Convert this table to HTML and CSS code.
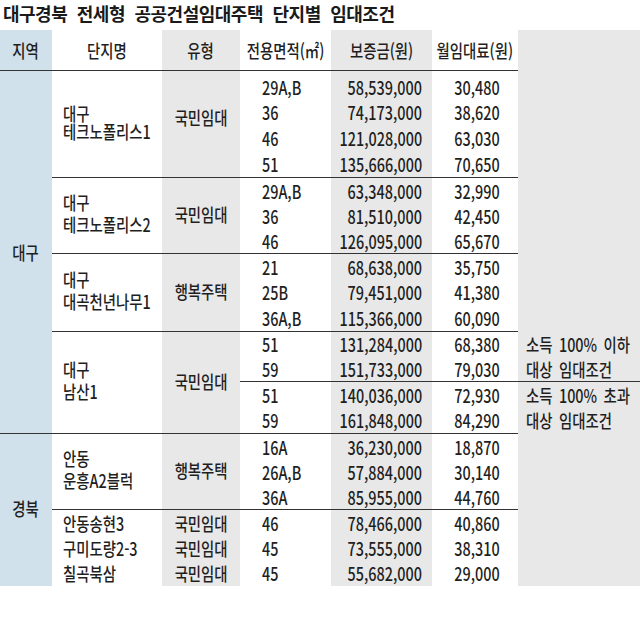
FILE: index.html
```html
<!DOCTYPE html>
<html lang="ko">
<head>
<meta charset="utf-8">
<title>대구경북 전세형 공공건설임대주택 단지별 임대조건</title>
<link rel="stylesheet" href="styles.css">
</head>
<body>
<main class="graphic">
  <h1 class="title">대구경북 전세형 공공건설임대주택 단지별 임대조건</h1>
  <div class="sheet">
    <!-- header -->
    <div class="cell hd rule-b"><span class="t">지역</span></div>
    <div class="cell hd rule-b"><span class="t">단지명</span></div>
    <div class="cell hd rule-b"><span class="t">유형</span></div>
    <div class="cell hd rule-b"><span class="t">전용면적(㎡)</span></div>
    <div class="cell hd rule-b"><span class="t">보증금(원)</span></div>
    <div class="cell hd rule-b"><span class="t">월임대료(원)</span></div>
    <div class="cell hd"></div>

    <!-- 대구 테크노폴리스1 -->
    <div class="cell region span14"><span class="t">대구</span></div>
    <div class="cell name span4 tight"><span class="t"><span class="ln">대구</span><span class="ln">테크노폴리스1</span></span></div>
    <div class="cell type span4 lift-g1"><span class="t">국민임대</span></div>
    <div class="cell area first"><span class="t">29A,B</span></div>
    <div class="cell deposit first"><span class="t">58,539,000</span></div>
    <div class="cell rent first"><span class="t">30,480</span></div>
    <div class="cell note span10"></div>

    <div class="cell area"><span class="t">36</span></div>
    <div class="cell deposit"><span class="t">74,173,000</span></div>
    <div class="cell rent"><span class="t">38,620</span></div>

    <div class="cell area"><span class="t">46</span></div>
    <div class="cell deposit"><span class="t">121,028,000</span></div>
    <div class="cell rent"><span class="t">63,030</span></div>

    <div class="cell area"><span class="t">51</span></div>
    <div class="cell deposit"><span class="t">135,666,000</span></div>
    <div class="cell rent"><span class="t">70,650</span></div>

    <!-- 대구 테크노폴리스2 -->
    <div class="cell name span3 rule-t"><span class="t"><span class="ln">대구</span><span class="ln">테크노폴리스2</span></span></div>
    <div class="cell type span3 rule-t"><span class="t">국민임대</span></div>
    <div class="cell area rule-t"><span class="t">29A,B</span></div>
    <div class="cell deposit rule-t"><span class="t">63,348,000</span></div>
    <div class="cell rent rule-t"><span class="t">32,990</span></div>

    <div class="cell area"><span class="t">36</span></div>
    <div class="cell deposit"><span class="t">81,510,000</span></div>
    <div class="cell rent"><span class="t">42,450</span></div>

    <div class="cell area"><span class="t">46</span></div>
    <div class="cell deposit"><span class="t">126,095,000</span></div>
    <div class="cell rent"><span class="t">65,670</span></div>

    <!-- 대구 대곡천년나무1 -->
    <div class="cell name span3 rule-t"><span class="t"><span class="ln">대구</span><span class="ln">대곡천년나무1</span></span></div>
    <div class="cell type span3 rule-t"><span class="t">행복주택</span></div>
    <div class="cell area rule-t"><span class="t">21</span></div>
    <div class="cell deposit rule-t"><span class="t">68,638,000</span></div>
    <div class="cell rent rule-t"><span class="t">35,750</span></div>

    <div class="cell area"><span class="t">25B</span></div>
    <div class="cell deposit"><span class="t">79,451,000</span></div>
    <div class="cell rent"><span class="t">41,380</span></div>

    <div class="cell area"><span class="t">36A,B</span></div>
    <div class="cell deposit"><span class="t">115,366,000</span></div>
    <div class="cell rent"><span class="t">60,090</span></div>

    <!-- 대구 남산1 -->
    <div class="cell name span4 rule-t"><span class="t"><span class="ln">대구</span><span class="ln">남산1</span></span></div>
    <div class="cell type span4 rule-t"><span class="t">국민임대</span></div>
    <div class="cell area rule-t"><span class="t">51</span></div>
    <div class="cell deposit rule-t"><span class="t">131,284,000</span></div>
    <div class="cell rent rule-t"><span class="t">68,380</span></div>
    <div class="cell note-text"><span class="t">소득 100% 이하</span></div>

    <div class="cell area"><span class="t">59</span></div>
    <div class="cell deposit"><span class="t">151,733,000</span></div>
    <div class="cell rent"><span class="t">79,030</span></div>
    <div class="cell note-text"><span class="t">대상 임대조건</span></div>

    <div class="cell area rule-t"><span class="t">51</span></div>
    <div class="cell deposit rule-t"><span class="t">140,036,000</span></div>
    <div class="cell rent rule-t"><span class="t">72,930</span></div>
    <div class="cell note-text rule-t"><span class="t">소득 100% 초과</span></div>

    <div class="cell area"><span class="t">59</span></div>
    <div class="cell deposit"><span class="t">161,848,000</span></div>
    <div class="cell rent"><span class="t">84,290</span></div>
    <div class="cell note-text"><span class="t">대상 임대조건</span></div>

    <!-- 경북 안동 운흥A2블럭 -->
    <div class="cell region span6 rule-t lift-gb"><span class="t">경북</span></div>
    <div class="cell name span3 rule-t"><span class="t"><span class="ln">안동</span><span class="ln">운흥A2블럭</span></span></div>
    <div class="cell type span3 rule-t"><span class="t">행복주택</span></div>
    <div class="cell area rule-t"><span class="t">16A</span></div>
    <div class="cell deposit rule-t"><span class="t">36,230,000</span></div>
    <div class="cell rent rule-t"><span class="t">18,870</span></div>
    <div class="cell note span6"></div>

    <div class="cell area"><span class="t">26A,B</span></div>
    <div class="cell deposit"><span class="t">57,884,000</span></div>
    <div class="cell rent"><span class="t">30,140</span></div>

    <div class="cell area"><span class="t">36A</span></div>
    <div class="cell deposit"><span class="t">85,955,000</span></div>
    <div class="cell rent"><span class="t">44,760</span></div>

    <!-- 경북 single rows -->
    <div class="cell name single rule-t"><span class="t">안동송현3</span></div>
    <div class="cell type single rule-t"><span class="t">국민임대</span></div>
    <div class="cell area rule-t"><span class="t">46</span></div>
    <div class="cell deposit rule-t"><span class="t">78,466,000</span></div>
    <div class="cell rent rule-t"><span class="t">40,860</span></div>

    <div class="cell name single"><span class="t">구미도량2-3</span></div>
    <div class="cell type single"><span class="t">국민임대</span></div>
    <div class="cell area"><span class="t">45</span></div>
    <div class="cell deposit"><span class="t">73,555,000</span></div>
    <div class="cell rent"><span class="t">38,310</span></div>

    <div class="cell name single"><span class="t">칠곡북삼</span></div>
    <div class="cell type single"><span class="t">국민임대</span></div>
    <div class="cell area"><span class="t">45</span></div>
    <div class="cell deposit"><span class="t">55,682,000</span></div>
    <div class="cell rent"><span class="t">29,000</span></div>
  </div>
</main>
</body>
</html>
```

FILE: styles.css
```css
:root {
  --ink: #1f1f1f;
  --rule: #333333;
  --blue: #d0e1eb;
  --grey: #e8e8e8;
}

html, body {
  margin: 0;
  padding: 0;
  background: #ffffff;
}

body {
  font-family: "Noto Sans CJK KR", "Noto Sans", sans-serif;
  color: var(--ink);
}

.graphic {
  display: flex;
  flex-direction: column;
  width: 640px;
}

.title {
  margin: 0;
  height: 30px;
  padding-left: 3px;
  font-size: 18px;
  font-weight: 700;
  line-height: 26px;
  letter-spacing: -0.5px;
  word-spacing: 5px;
  color: #1a1a1a;
  white-space: nowrap;
}

.sheet {
  display: grid;
  grid-template-columns: 52px 110px 78px 91px 101px 86px 122px;
  grid-template-rows:
    41px
    28px 26px 26px 26px
    26px 25px 25px
    26px 26px 26px
    25px 25px
    26px 26px
    26px 25px 25px
    26px 25.5px 25.5px;
  background: linear-gradient(to right,
    var(--blue) 0 52px,
    #ffffff 52px 162px,
    var(--grey) 162px 240px,
    #ffffff 240px 331px,
    var(--grey) 331px 432px,
    #ffffff 432px 518px,
    var(--grey) 518px 640px);
  font-size: 18px;
  font-weight: 500;
  line-height: 22px;
}

.cell {
  box-sizing: border-box;
  display: flex;
  align-items: center;
  min-width: 0;
}

.t {
  display: inline-block;
  white-space: nowrap;
  transform: scaleX(0.8);
}

.ln {
  display: block;
}

/* header */
.hd {
  justify-content: center;
}
.hd .t { transform-origin: center center; }

.rule-b { border-bottom: 1px solid var(--rule); }
.rule-t { border-top: 1px solid var(--rule); }

/* spans */
.span3 { grid-row: span 3; }
.span4 { grid-row: span 4; }
.span6 { grid-row: span 6; }
.span10 { grid-row: span 10; }
.span14 { grid-row: span 14; }

/* columns */
.region {
  justify-content: center;
}
.region .t { transform-origin: center center; }
.lift-gb { padding-bottom: 5px; }

.name {
  justify-content: flex-start;
  padding-left: 11px;
  padding-bottom: 5px;
}
.name .t { transform-origin: left center; }
.name.tight { line-height: 18px; }
.name.single { padding-bottom: 0; }

.type {
  justify-content: center;
  padding-bottom: 4px;
}
.type .t { transform-origin: center center; }
.type.lift-g1 { padding-bottom: 14px; }
.type.single { padding-bottom: 0; }

.area {
  justify-content: flex-start;
  padding-left: 22px;
}
.area .t { transform-origin: left center; }

.deposit {
  justify-content: flex-end;
  padding-right: 10px;
}
.deposit .t { transform-origin: right center; }

.rent {
  justify-content: flex-end;
  padding-right: 18px;
}
.rent .t { transform-origin: right center; }

.first { padding-top: 3px; }

.note-text {
  justify-content: flex-start;
  padding-left: 8px;
  word-spacing: 3px;
}
.note-text .t { transform-origin: left center; }
```
